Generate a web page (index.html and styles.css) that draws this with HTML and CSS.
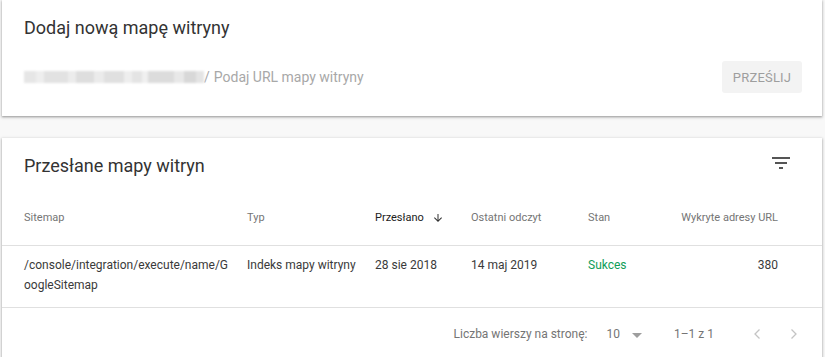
FILE: index.html
```html
<!DOCTYPE html>
<html lang="pl">

<head>
    <meta charset="UTF-8">
    <meta name="viewport" content="width=device-width, initial-scale=1.0">
    <title>Mapy witryn</title>
    <link rel="stylesheet" href="styles.css">
</head>

<body>
    <section class="card add-card">
        <h2 class="card-title">Dodaj nową mapę witryny</h2>
        <div class="add-row">
            <div class="url-field">
                <span class="domain-blur"></span>
                <span class="slash">/</span>
                <span class="placeholder">Podaj URL mapy witryny</span>
            </div>
            <button class="submit-btn" type="button">PRZEŚLIJ</button>
        </div>
    </section>

    <section class="card list-card">
        <div class="list-head">
            <h2 class="card-title">Przesłane mapy witryn</h2>
            <svg class="filter-icon" width="24" height="24" viewBox="0 0 24 24">
                <path d="M3 6h18v2H3zM6 11h12v2H6zM10 16h4v2h-4z" fill="#555"></path>
            </svg>
        </div>

        <div class="table">
            <div class="row head">
                <div class="cell">Sitemap</div>
                <div class="cell">Typ</div>
                <div class="cell sorted">Przesłano
                    <svg width="12" height="12" viewBox="0 0 24 24">
                        <path d="M20 12l-1.41-1.41L13 16.17V4h-2v12.17l-5.58-5.59L4 12l8 8 8-8z" fill="#333"></path>
                    </svg>
                </div>
                <div class="cell">Ostatni odczyt</div>
                <div class="cell">Stan</div>
                <div class="cell num">Wykryte adresy URL</div>
            </div>
            <div class="row body">
                <div class="cell path">/console/integration/execute/name/GoogleSitemap</div>
                <div class="cell">Indeks mapy witryny</div>
                <div class="cell">28 sie 2018</div>
                <div class="cell">14 maj 2019</div>
                <div class="cell ok">Sukces</div>
                <div class="cell num">380</div>
            </div>
        </div>

        <div class="pager">
            <span class="pager-label">Liczba wierszy na stronę:</span>
            <span class="pager-size">10 <span class="caret"></span></span>
            <span class="pager-range">1–1 z 1</span>
            <svg class="chev" width="24" height="24" viewBox="0 0 24 24">
                <path d="M14.5 7.5L10 12l4.5 4.5" fill="none" stroke="#c4c4c4" stroke-width="1.3"></path>
            </svg>
            <svg class="chev" width="24" height="24" viewBox="0 0 24 24">
                <path d="M9.5 7.5L14 12l-4.5 4.5" fill="none" stroke="#c4c4c4" stroke-width="1.3"></path>
            </svg>
        </div>
    </section>
</body>

</html>
```

FILE: styles.css
```css
body {
    font-family: Roboto, "Liberation Sans", Arial, sans-serif;
    background-color: #f8f8f8;
    margin: 0;
    padding: 0 3px 0 2px;
    color: #333;
}

.card {
    background-color: #fff;
    box-shadow: 0 1px 2px rgba(0, 0, 0, 0.3), 0 1px 3px 1px rgba(0, 0, 0, 0.1);
}

.card-title {
    margin: 0;
    font-size: 18px;
    font-weight: 400;
    color: #333;
    line-height: 24px;
}

.add-card {
    padding: 16px 20px 0 22px;
    height: 100px;
}

.add-row {
    display: flex;
    align-items: center;
    justify-content: space-between;
    margin-top: 21px;
}

.url-field {
    display: flex;
    align-items: center;
    font-size: 14px;
    color: #a8a8a8;
}

.domain-blur {
    display: inline-block;
    width: 180px;
    height: 12px;
    background:
        linear-gradient(90deg,
            #e6e6e6 0 12px, #eeeeee 12px 20px, #e2e2e2 20px 44px, #ececec 44px 52px,
            #dedede 52px 70px, #ebebeb 70px 80px, #e0e0e0 80px 100px, #eeeeee 100px 108px,
            #e4e4e4 108px 118px, #f0f0f0 118px 124px, #dcdcdc 124px 150px, #e8e8e8 150px 160px,
            #d8d8d8 160px 172px, #e4e4e4 172px 180px);
    filter: blur(1px);
}

.slash {
    margin: 0 4px 0 0;
}

.submit-btn {
    font-family: inherit;
    font-size: 13px;
    color: #9e9e9e;
    background-color: #f3f3f3;
    border: none;
    border-radius: 3px;
    width: 80px;
    height: 32px;
    padding: 0;
    letter-spacing: 0.2px;
}

.list-card {
    margin-top: 22px;
    height: 240px;
}

.list-head {
    display: flex;
    align-items: flex-start;
    justify-content: space-between;
    padding: 16px 29px 0 22px;
    height: 24px;
}

.filter-icon {
    margin-top: -3px;
}

.row {
    display: grid;
    grid-template-columns: 223px 128px 96px 117px 95px 95px;
    padding-left: 22px;
}

.row.head {
    margin-top: 32px;
    font-size: 11px;
    line-height: 16px;
    color: #757575;
    height: 35px;
    border-bottom: 1px solid #e0e0e0;
}

.cell.sorted {
    color: #212121;
    display: flex;
    align-items: center;
    align-self: start;
    gap: 8px;
}

.num {
    display: flex;
    justify-content: flex-end;
    align-items: flex-start;
    white-space: nowrap;
}

.row.body {
    font-size: 12px;
    color: #3a3a3a;
    line-height: 20px;
    padding-top: 9px;
    padding-bottom: 12px;
    border-bottom: 1px solid #e0e0e0;
}

.path {
    word-break: break-all;
    padding-right: 15px;
}

.ok {
    color: #0f9d58;
}

.pager {
    display: flex;
    align-items: center;
    justify-content: flex-end;
    padding-right: 16px;
    height: 52px;
    font-size: 12px;
    color: #757575;
}

.pager-size {
    margin-left: 19px;
    display: flex;
    align-items: center;
}

.caret {
    display: inline-block;
    margin-left: 12px;
    width: 0;
    height: 0;
    border-left: 5px solid transparent;
    border-right: 5px solid transparent;
    border-top: 5px solid #9e9e9e;
    margin-top: 2px;
}

.pager-range {
    margin-left: 32px;
    margin-right: 31px;
}

.chev + .chev {
    margin-left: 13px;
}
```
